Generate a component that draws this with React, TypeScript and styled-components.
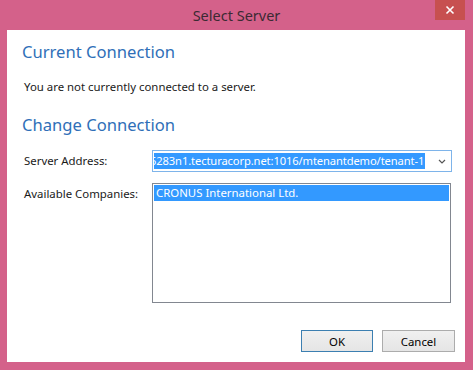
import React from "react";
import styled, { createGlobalStyle } from "styled-components";

const Global = createGlobalStyle`
  html, body {
    margin: 0;
    padding: 0;
    background: #d4618a;
  }
  * {
    box-sizing: border-box;
  }
`;

const FONT = `"Noto Sans", "Open Sans", sans-serif`;

function Window(props) {
  return <Window.Presenter {...props}></Window.Presenter>;
}

Window.Presenter = styled.div`
  width: 473px;
  height: 370px;
  display: flex;
  flex-direction: column;
  background: #d4618a;
  font-family: ${FONT};
  position: relative;
`;

const TitleBar = styled.div`
  height: 30px;
  display: flex;
  align-items: center;
  justify-content: center;
  font-size: 14.5px;
  color: #3b2a33;
  padding-bottom: 1px;
`;

const CloseButton = styled.div`
  position: absolute;
  top: 0;
  right: 8px;
  width: 30px;
  height: 20px;
  background: #c75050;
  display: flex;
  align-items: center;
  justify-content: center;
`;

const Client = styled.div`
  flex: 1;
  margin: 0 8px 8px 7px;
  background: #ffffff;
  display: flex;
  flex-direction: column;
  padding: 11px 10px 10px 15px;
`;

const Heading = styled.div`
  font-size: 16.6px;
  line-height: 22px;
  color: #2f6fb8;
  margin-top: ${(p) => p.$top || 0}px;
`;

const Note = styled.div`
  font-size: 11.4px;
  line-height: 16px;
  color: #1a1a1a;
  margin: 16px 0 0 2px;
`;

const Form = styled.div`
  display: grid;
  grid-template-columns: 128px 300px;
  row-gap: 11px;
  margin: 14px 0 0 2px;
  align-items: start;
`;

const Label = styled.div`
  font-size: 11.4px;
  line-height: 16px;
  color: #1a1a1a;
  padding-top: ${(p) => p.$pad || 0}px;
`;

const Combo = styled.div`
  height: 22px;
  border: 1px solid #7eb4ea;
  display: flex;
  align-items: center;
  padding: 0 5px 0 1px;
  gap: 6px;
`;

const ComboText = styled.div`
  flex: 1;
  min-width: 0;
  overflow: hidden;
  white-space: nowrap;
  display: flex;
`;

const Selected = styled.span`
  flex: none;
  background: #3399ff;
  color: #ffffff;
  font-size: 11.2px;
  letter-spacing: -0.12px;
  line-height: 16px;
  margin-left: -4px;
  padding-right: 1px;
`;

const ListBox = styled.div`
  height: 120px;
  width: 299px;
  border: 1px solid #828790;
  padding: 1px;
`;

const Item = styled.div`
  height: 16px;
  background: #3399ff;
  color: #ffffff;
  font-size: 11.4px;
  line-height: 16px;
  padding-left: 2px;
  white-space: nowrap;
`;

const Footer = styled.div`
  margin-top: auto;
  display: flex;
  justify-content: flex-end;
  gap: 9px;
`;

const Button = styled.div`
  width: ${(p) => p.$w}px;
  height: 22px;
  border: 1px solid ${(p) => (p.$default ? "#3c7fb1" : "#acacac")};
  background: linear-gradient(#f0f0f0, #e5e5e5);
  font-size: 11.4px;
  color: #000;
  display: flex;
  align-items: center;
  justify-content: center;
`;

export default function App() {
  return (
    <>
      <Global />
      <Window>
        <TitleBar>Select Server</TitleBar>
        <CloseButton>
          <svg width="10" height="10" viewBox="0 0 10 10">
            <path d="M1.5 1.5 L8.5 8.5 M8.5 1.5 L1.5 8.5" stroke="#fff" strokeWidth="1.6" />
          </svg>
        </CloseButton>
        <Client>
          <Heading>Current Connection</Heading>
          <Note>You are not currently connected to a server.</Note>
          <Heading $top={19}>Change Connection</Heading>
          <Form>
            <Label $pad={3}>Server Address:</Label>
            <Combo>
              <ComboText>
                <Selected>5283n1.tecturacorp.net:1016/mtenantdemo/tenant-1</Selected>
              </ComboText>
              <svg width="8" height="5" viewBox="0 0 8 5">
                <path d="M1 1 L4 4 L7 1" stroke="#555" strokeWidth="1.2" fill="none" />
              </svg>
            </Combo>
            <Label $pad={3}>Available Companies:</Label>
            <ListBox>
              <Item>CRONUS International Ltd.</Item>
            </ListBox>
          </Form>
          <Footer>
            <Button $w={72} $default>OK</Button>
            <Button $w={73}>Cancel</Button>
          </Footer>
        </Client>
      </Window>
    </>
  );
}
